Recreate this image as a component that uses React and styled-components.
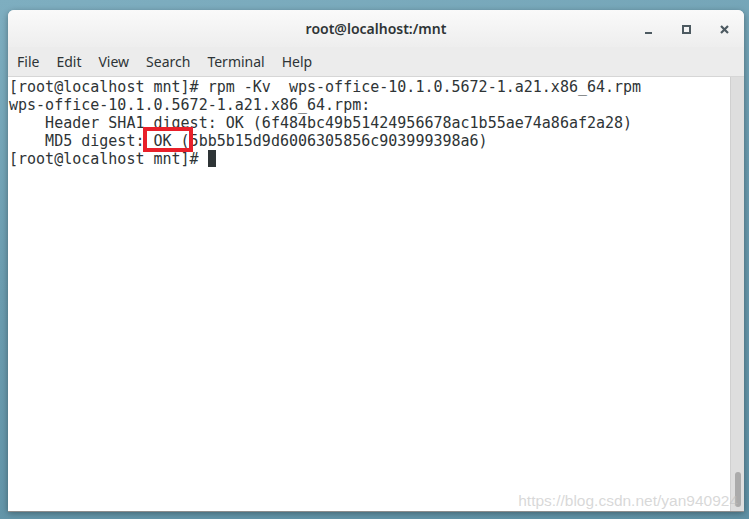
import React from "react";
import styled, { createGlobalStyle } from "styled-components";

const Global = createGlobalStyle`
  html, body { margin: 0; padding: 0; }
  body {
    width: 749px;
    height: 519px;
    overflow: hidden;
    font-family: "Noto Sans", "DejaVu Sans", sans-serif;
  }
`;

const Desktop = styled.div`
  width: 749px;
  height: 519px;
  box-sizing: border-box;
  padding: 10px 5px 8px 8px;
  background: linear-gradient(170deg, #7eaec0 0%, #6b9caf 45%, #5f91a5 100%);
  display: flex;
`;

const Window = styled.div`
  position: relative;
  flex: 1;
  display: flex;
  flex-direction: column;
  border-radius: 6px 6px 0 0;
  overflow: hidden;
  background: #ececec;
  box-shadow: 0 1px 0 #8c8c8c, 0 2px 6px rgba(0, 0, 0, 0.35);
`;

const TitleBar = styled.div`
  height: 37px;
  display: flex;
  align-items: center;
  justify-content: center;
  position: relative;
  background: linear-gradient(#fafafa, #eeeeee);
  color: #2e3436;
  font-size: 14px;
  font-weight: 600;
`;

const Controls = styled.div`
  position: absolute;
  right: 1px;
  top: 15px;
  display: flex;
  align-items: flex-start;
`;

const CtrlBox = styled.div`
  width: 38px;
  height: 9px;
  display: flex;
  justify-content: center;
  align-items: ${(p) => (p.$bottom ? "flex-end" : "flex-start")};
`;

const MinBar = styled.div`
  width: 7px;
  height: 2px;
  background: #4d5a61;
`;

const MaxSquare = styled.div`
  width: 9px;
  height: 9px;
  box-sizing: border-box;
  border: 2px solid #4d5a61;
`;

const MenuBar = styled.div`
  height: 29px;
  display: flex;
  align-items: center;
  padding-left: 9px;
  gap: 17px;
  background: #ececec;
  border-bottom: 1px solid #d6d6d6;
  color: #2e3436;
  font-size: 14px;
`;

const MenuItem = styled.span`
  line-height: 1;
`;

const Body = styled.div`
  flex: 1;
  display: flex;
  min-height: 0;
`;

const Terminal = styled.div`
  position: relative;
  flex: 1;
  background: #ffffff;
  padding: 1px 0 0 1px;
  font-family: "DejaVu Sans Mono", monospace;
  font-size: 15px;
  line-height: 18px;
  color: #2e3436;
  white-space: pre;
`;

const Line = styled.div`
  height: 18px;
`;

const Cursor = styled.span`
  display: inline-block;
  width: 8px;
  height: 17px;
  vertical-align: top;
  background: #2e3436;
`;

const Highlight = styled.div`
  position: absolute;
  left: 135px;
  top: 50px;
  width: 42px;
  height: 17px;
  border: 4px solid #e8202a;
`;

const Scrollbar = styled.div`
  width: 13px;
  background: #dedede;
  border-left: 1px solid #d0d0d0;
  display: flex;
  flex-direction: column;
  justify-content: flex-end;
  align-items: center;
  padding-bottom: 4px;
`;

const Thumb = styled.div`
  width: 6px;
  height: 35px;
  border-radius: 3px;
  background: #ababab;
`;

const Watermark = styled.div`
  position: absolute;
  right: 6px;
  bottom: 1px;
  font-family: "Liberation Sans", Arial, sans-serif;
  font-size: 15.5px;
  color: rgba(190, 190, 190, 0.6);
  pointer-events: none;
`;

const lines = [
  "[root@localhost mnt]# rpm -Kv  wps-office-10.1.0.5672-1.a21.x86_64.rpm",
  "wps-office-10.1.0.5672-1.a21.x86_64.rpm:",
  "    Header SHA1 digest: OK (6f484bc49b51424956678ac1b55ae74a86af2a28)",
  "    MD5 digest: OK (5bb5b15d9d6006305856c903999398a6)",
];

export default function App() {
  return (
    <>
      <Global />
      <Desktop>
        <Window>
          <TitleBar>
            root@localhost:/mnt
            <Controls>
              <CtrlBox $bottom>
                <MinBar />
              </CtrlBox>
              <CtrlBox>
                <MaxSquare />
              </CtrlBox>
              <CtrlBox>
                <svg width="9" height="9" viewBox="0 0 9 9">
                  <path d="M1 1 L8 8 M8 1 L1 8" stroke="#4d5a61" strokeWidth="2.2" />
                </svg>
              </CtrlBox>
            </Controls>
          </TitleBar>
          <MenuBar>
            {["File", "Edit", "View", "Search", "Terminal", "Help"].map((m) => (
              <MenuItem key={m}>{m}</MenuItem>
            ))}
          </MenuBar>
          <Body>
            <Terminal>
              {lines.map((l, i) => (
                <Line key={i}>{l}</Line>
              ))}
              <Line>
                {"[root@localhost mnt]# "}
                <Cursor />
              </Line>
              <Highlight />
            </Terminal>
            <Scrollbar>
              <Thumb />
            </Scrollbar>
          </Body>
          <Watermark>https://blog.csdn.net/yan940924</Watermark>
        </Window>
      </Desktop>
    </>
  );
}
